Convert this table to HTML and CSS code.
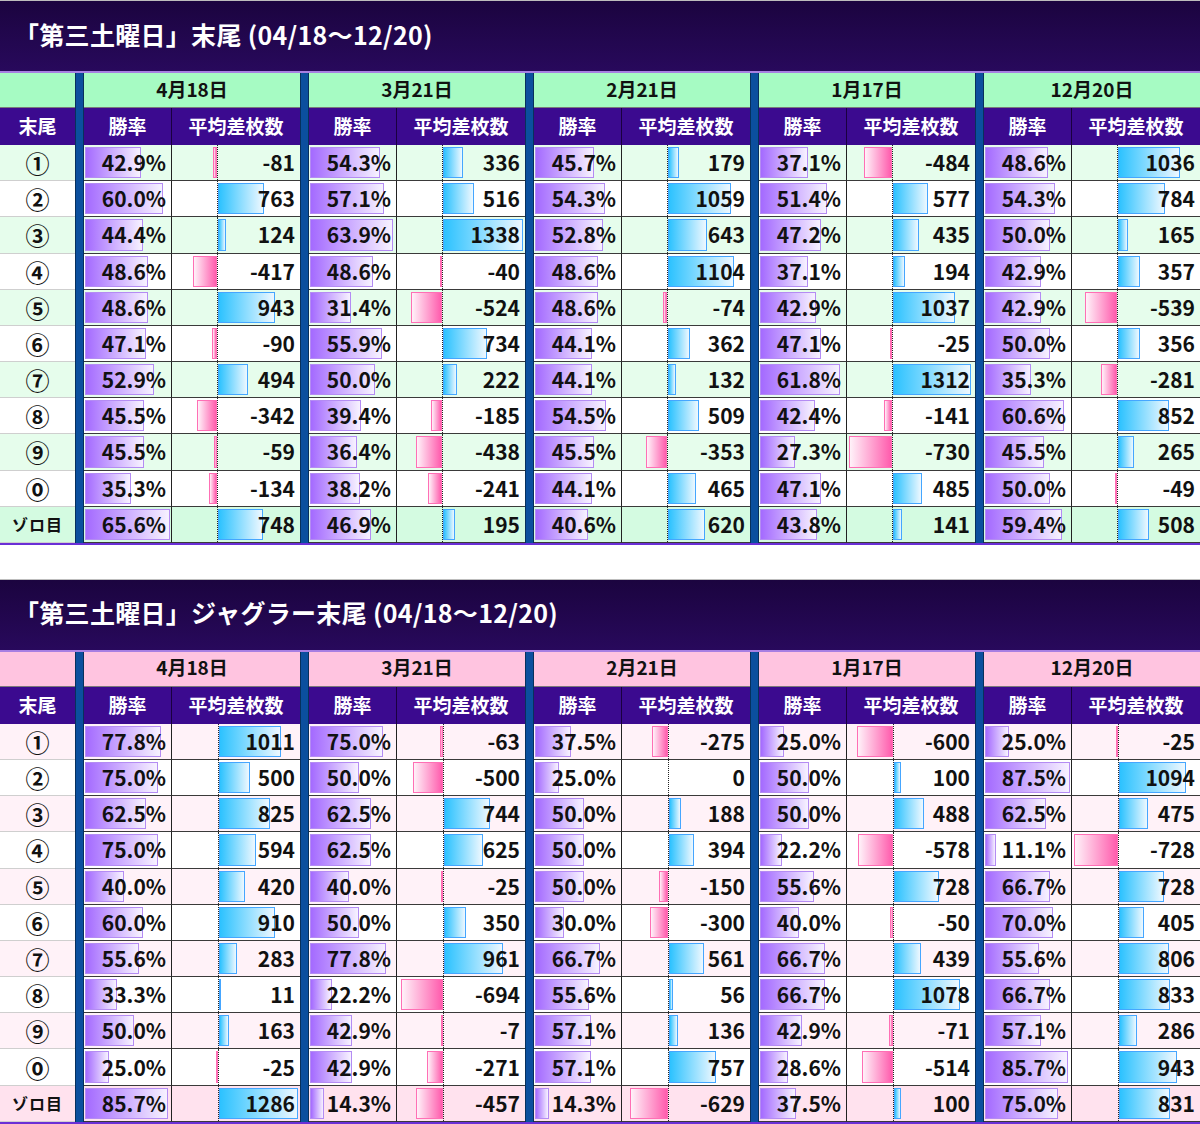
FILE: index.html
```html
<!DOCTYPE html>
<html lang="ja">
<head>
<meta charset="utf-8">
<title>第三土曜日 末尾</title>
<link rel="stylesheet" href="styles.css">
</head>
<body>
<section class="block green">
  <h2 class="title">「第三土曜日」末尾 (04/18～12/20)</h2>
  <div class="grid" id="t1"></div>
</section>
<section class="block pink">
  <h2 class="title">「第三土曜日」ジャグラー末尾 (04/18～12/20)</h2>
  <div class="grid" id="t2"></div>
</section>
<script src="script.js"></script>
</body>
</html>
```
FILE: styles.css
```css
* { box-sizing: border-box; }
html, body { margin: 0; padding: 0; background: #fff; }
body {
  width: 1200px;
  font-family: "Noto Sans CJK JP", "Noto Sans", "DejaVu Sans", sans-serif;
  color: #111;
}
.block + .block { margin-top: 34px; }
.green { --hd: #a6fbc3; --odd: #e6fdec; --last: #d4fbe1; }
.pink { --hd: #ffc4e0; --odd: #fff2f8; --last: #ffe2ee; }

.title {
  margin: 0;
  height: 73px;
  border-top: 1px solid #bdbdbd;
  border-bottom: 2px solid #a77fe2;
  background: linear-gradient(#1b043f, #28095c);
  color: #fff;
  font-size: 25px;
  font-weight: 700;
  display: flex;
  align-items: center;
  padding: 0 0 5px 14px;
  letter-spacing: 0.3px;
}

.grid {
  display: grid;
  grid-template-columns: 75px repeat(5, 9px 88px 128px);
  grid-template-rows: 35px 37px repeat(11, 36.18px);
  border-bottom: 2px solid #6a2fd6;
}

.sep {
  grid-row: 1 / -1;
  background: #0b4f9e;
  border-left: 1px solid #07305c;
  border-right: 1px solid #07305c;
}
.s1 { grid-column: 2; }
.s2 { grid-column: 5; }
.s3 { grid-column: 8; }
.s4 { grid-column: 11; }
.s5 { grid-column: 14; }

.hd {
  background: var(--hd);
  display: flex;
  align-items: center;
  justify-content: center;
  font-size: 19px;
  font-weight: 700;
  color: #111;
  border-bottom: 1px solid #7a7a7a;
  padding-bottom: 4px;
}
.date { grid-column: span 2; }

.hh {
  background: #3b0a8f;
  color: #fff;
  font-size: 19px;
  font-weight: 700;
  display: flex;
  align-items: center;
  justify-content: center;
  padding-bottom: 2px;
}
.hh.rh { border-right: 1px solid #1a003f; }

.lbl {
  display: flex;
  align-items: center;
  justify-content: center;
  font-size: 24px;
  font-weight: 700;
  background: #fff;
  border-bottom: 1px solid #cfcfcf;
}
.lbl.zoro { font-size: 16px; letter-spacing: 1px; }

.rate, .diff {
  display: grid;
  background: #fff;
  border-bottom: 1px solid #3a3a3a;
}
.rate { border-right: 1px solid #222; }
.odd { background: var(--odd); }
.last { background: var(--last); }

.bar {
  grid-area: 1 / 1;
  justify-self: start;
  margin: 2px 0 2px 1px;
  border: 1px solid #b48cf3;
  background: linear-gradient(90deg, #a46aff, #f7f2ff);
}

.num {
  grid-area: 1 / 1;
  justify-self: end;
  align-self: center;
  padding-right: 5px;
  font-size: 21px;
  font-weight: 700;
  line-height: 1;
  color: #111;
  position: relative;
}

.diff { grid-template-columns: var(--axis) 1px 1fr; }
.axis {
  grid-column: 2;
  grid-row: 1;
  border-left: 1px dotted #222;
}
.neg, .pos {
  grid-row: 1;
  margin: 2px 0;
}
.neg {
  grid-column: 1;
  justify-self: end;
  border: 1px solid #ff6fb5;
  background: linear-gradient(90deg, #fff2f9, #ff5cad);
}
.pos {
  grid-column: 3;
  justify-self: start;
  border: 1px solid #45a6ff;
  background: linear-gradient(90deg, #2cc2ff, #eef8ff);
}
.diff .num { grid-column: 1 / -1; grid-row: 1; }
```
FILE: script.js
```js
(function () {
  var dates = ['4月18日', '3月21日', '2月21日', '1月17日', '12月20日'];
  var labels = ['①', '②', '③', '④', '⑤', '⑥', '⑦', '⑧', '⑨', '⓪', 'ゾロ目'];

  var d1 = [
    '42.9 -81 54.3 336 45.7 179 37.1 -484 48.6 1036',
    '60.0 763 57.1 516 54.3 1059 51.4 577 54.3 784',
    '44.4 124 63.9 1338 52.8 643 47.2 435 50.0 165',
    '48.6 -417 48.6 -40 48.6 1104 37.1 194 42.9 357',
    '48.6 943 31.4 -524 48.6 -74 42.9 1037 42.9 -539',
    '47.1 -90 55.9 734 44.1 362 47.1 -25 50.0 356',
    '52.9 494 50.0 222 44.1 132 61.8 1312 35.3 -281',
    '45.5 -342 39.4 -185 54.5 509 42.4 -141 60.6 852',
    '45.5 -59 36.4 -438 45.5 -353 27.3 -730 45.5 265',
    '35.3 -134 38.2 -241 44.1 465 47.1 485 50.0 -49',
    '65.6 748 46.9 195 40.6 620 43.8 141 59.4 508'
  ];
  var d2 = [
    '77.8 1011 75.0 -63 37.5 -275 25.0 -600 25.0 -25',
    '75.0 500 50.0 -500 25.0 0 50.0 100 87.5 1094',
    '62.5 825 62.5 744 50.0 188 50.0 488 62.5 475',
    '75.0 594 62.5 625 50.0 394 22.2 -578 11.1 -728',
    '40.0 420 40.0 -25 50.0 -150 55.6 728 66.7 728',
    '60.0 910 50.0 350 30.0 -300 40.0 -50 70.0 405',
    '55.6 283 77.8 961 66.7 561 66.7 439 55.6 806',
    '33.3 11 22.2 -694 55.6 56 66.7 1078 66.7 833',
    '50.0 163 42.9 -7 57.1 136 42.9 -71 57.1 286',
    '25.0 -25 42.9 -271 57.1 757 28.6 -514 85.7 943',
    '85.7 1286 14.3 -457 14.3 -629 37.5 100 75.0 831'
  ];

  function add(parent, tag, cls, text) {
    var e = document.createElement(tag);
    e.className = cls;
    if (text !== undefined) e.textContent = text;
    parent.appendChild(e);
    return e;
  }

  function build(id, lines) {
    var g = document.getElementById(id);
    var rows = lines.map(function (l) { return l.split(' '); });
    var rmax = 0, dmin = 0, dmax = 0;
    rows.forEach(function (r) {
      for (var i = 0; i < 10; i += 2) {
        rmax = Math.max(rmax, parseFloat(r[i]));
        var d = +r[i + 1];
        dmin = Math.min(dmin, d);
        dmax = Math.max(dmax, d);
      }
    });
    var W = 123, range = dmax - dmin;
    var axis = 2 + W * (-dmin) / range;
    g.style.setProperty('--axis', axis.toFixed(2) + 'px');

    for (var s = 1; s <= 5; s++) add(g, 'div', 'sep s' + s);
    add(g, 'div', 'hd');
    dates.forEach(function (d) { add(g, 'div', 'hd date', d); });
    add(g, 'div', 'hh', '末尾');
    for (var k = 0; k < 5; k++) {
      add(g, 'div', 'hh rh', '勝率');
      add(g, 'div', 'hh', '平均差枚数');
    }

    rows.forEach(function (r, i) {
      var cls = i === 10 ? ' last' : (i % 2 === 0 ? ' odd' : '');
      add(g, 'div', 'lbl' + cls + (i === 10 ? ' zoro' : ''), labels[i]);
      for (var j = 0; j < 10; j += 2) {
        var pct = r[j], val = +r[j + 1];
        var c = add(g, 'div', 'rate' + cls);
        var b = add(c, 'i', 'bar');
        b.style.width = (parseFloat(pct) / rmax * 85).toFixed(1) + 'px';
        add(c, 'span', 'num', pct + '%');

        var dc = add(g, 'div', 'diff' + cls);
        add(dc, 'i', 'axis');
        if (val !== 0) {
          var bb = add(dc, 'i', val < 0 ? 'neg' : 'pos');
          bb.style.width = (Math.abs(val) / range * W).toFixed(1) + 'px';
        }
        add(dc, 'span', 'num', String(val));
      }
    });
  }

  build('t1', d1);
  build('t2', d2);
})();
```
